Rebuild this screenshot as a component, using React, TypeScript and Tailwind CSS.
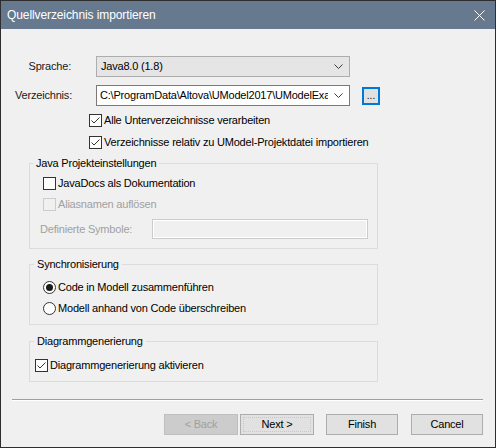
import React from "react";

function Chevron() {
  return (
    <svg width="9" height="5" viewBox="0 0 9 5" className="shrink-0">
      <path d="M0.5 0.5 L4.5 4.5 L8.5 0.5" fill="none" stroke="#3c3c3c" strokeWidth="1" />
    </svg>
  );
}

function Check({ checked, disabled }: { checked?: boolean; disabled?: boolean }) {
  return (
    <span
      className={
        disabled
          ? "w-[13px] h-[13px] shrink-0 border border-[#cccccc] bg-[#f0f0f0] flex items-center justify-center"
          : "w-[13px] h-[13px] shrink-0 border border-[#333333] bg-white flex items-center justify-center"
      }
    >
      {checked && (
        <svg width="11" height="11" viewBox="0 0 11 11">
          <path d="M1.5 5.5 L4 8 L9.5 2.5" fill="none" stroke="#333333" strokeWidth="1" />
        </svg>
      )}
    </span>
  );
}

function Radio({ checked }: { checked?: boolean }) {
  return (
    <span className="w-[13px] h-[13px] shrink-0 rounded-full border border-[#333333] bg-white flex items-center justify-center">
      {checked && <span className="w-[7px] h-[7px] rounded-full bg-[#1a1a1a]" />}
    </span>
  );
}

export default function App() {
  return (
    <div className="w-[496px] h-[448px] bg-[#f0f0f0] border border-[#2e2e2e] flex flex-col text-[11px] tracking-[-0.2px] leading-[15px] text-black font-['Liberation_Sans',Arial,sans-serif] overflow-hidden">
      {/* title bar */}
      <div className="h-[28px] shrink-0 bg-[#67798f] flex items-center justify-between pl-[6px] pr-[10px] text-white text-[12px] tracking-[-0.1px]">
        <span>Quellverzeichnis importieren</span>
        <svg width="11" height="11" viewBox="0 0 11 11">
          <path d="M0.5 0.5 L10.5 10.5 M10.5 0.5 L0.5 10.5" stroke="#ffffff" strokeWidth="1" />
        </svg>
      </div>

      {/* Sprache */}
      <div className="mt-[27px] h-[21px] flex items-center">
        <span className="w-[70px] text-right text-[#1a1a1a]">Sprache:</span>
        <div className="ml-[25px] w-[254px] h-[21px] bg-[#e5e5e5] border border-[#adadad] flex items-center justify-between pl-[4px] pr-[6px]">
          <span>Java8.0 (1.8)</span>
          <Chevron />
        </div>
      </div>

      {/* Verzeichnis */}
      <div className="mt-[8px] h-[21px] flex items-center">
        <span className="w-[71px] text-right text-[#1a1a1a]">Verzeichnis:</span>
        <div className="ml-[24px] w-[254px] h-[21px] bg-white border border-[#7a7a7a] flex items-center pl-[3px] pr-[6px] gap-[6px]">
          <span className="flex-1 min-w-0 overflow-hidden whitespace-nowrap">
            C:\ProgramData\Altova\UModel2017\UModelExamples
          </span>
          <Chevron />
        </div>
        <div className="ml-[12px] w-[18px] h-[18px] border-2 border-[#0078d7] bg-[#e1e1e1] flex items-end justify-center pb-[2px] text-[10px] leading-[10px] tracking-normal">
          ...
        </div>
      </div>

      {/* directory options */}
      <div className="mt-[4px] ml-[88px] h-[20px] flex items-center gap-[2px]">
        <Check checked />
        <span>Alle Unterverzeichnisse verarbeiten</span>
      </div>
      <div className="mt-[2px] ml-[88px] h-[20px] flex items-center gap-[2px]">
        <Check checked />
        <span>Verzeichnisse relativ zu UModel-Projektdatei importieren</span>
      </div>

      {/* Java Projekteinstellungen */}
      <fieldset className="mt-[4px] ml-[28px] w-[349px] border border-[#dcdcdc] pb-[9px]">
        <legend className="ml-[3px] px-[3px] leading-[15px]">Java Projekteinstellungen</legend>
        <div className="mt-[2px] h-[21px] pl-[13px] flex items-center gap-[2px]">
          <Check />
          <span>JavaDocs als Dokumentation</span>
        </div>
        <div className="h-[21px] pl-[13px] flex items-center gap-[2px]">
          <Check disabled />
          <span className="text-[#a0a0a0]">Aliasnamen auflösen</span>
        </div>
        <div className="mt-[4px] h-[20px] pl-[10px] pr-[9px] flex items-center">
          <span className="text-[#a0a0a0]">Definierte Symbole:</span>
          <div className="ml-auto w-[216px] h-[20px] border border-[#cccccc] shadow-[inset_0_0_0_1px_#ffffff] bg-[#f0f0f0]" />
        </div>
      </fieldset>

      {/* Synchronisierung */}
      <fieldset className="mt-[8px] ml-[28px] w-[349px] border border-[#dcdcdc] pb-[5px]">
        <legend className="ml-[4px] px-[3px] leading-[15px]">Synchronisierung</legend>
        <div className="mt-[5px] h-[21px] pl-[13px] flex items-center gap-[2px]">
          <Radio checked />
          <span>Code in Modell zusammenführen</span>
        </div>
        <div className="h-[21px] pl-[13px] flex items-center gap-[2px]">
          <Radio />
          <span>Modell anhand von Code überschreiben</span>
        </div>
      </fieldset>

      {/* Diagrammgenerierung */}
      <fieldset className="mt-[9px] ml-[28px] w-[349px] border border-[#dcdcdc] pb-[6px]">
        <legend className="ml-[4px] px-[3px] leading-[15px]">Diagrammgenerierung</legend>
        <div className="mt-[6px] h-[20px] pl-[5px] flex items-center gap-[2px]">
          <Check checked />
          <span>Diagrammgenerierung aktivieren</span>
        </div>
      </fieldset>

      {/* separator */}
      <div className="mt-[17px] ml-[11px] w-[471px] border-t border-[#a0a0a0] border-b border-b-white" />

      {/* buttons */}
      <div className="mt-[13px] flex">
        <button className="ml-[163px] w-[74px] h-[21px] bg-[#cccccc] border border-[#bfbfbf] text-[#a0a0a0]">
          &lt; Back
        </button>
        <button className="ml-[2px] w-[74px] h-[21px] bg-[#e1e1e1] border border-[#adadad] text-black p-[2px]">
          <span className="block w-full h-full border border-dotted border-[#c8c8c8] leading-[13px]">Next &gt;</span>
        </button>
        <button className="ml-[12px] w-[72px] h-[21px] bg-[#e1e1e1] border border-[#adadad] text-black">
          Finish
        </button>
        <button className="ml-[13px] w-[72px] h-[21px] bg-[#e1e1e1] border border-[#adadad] text-black">
          Cancel
        </button>
      </div>
    </div>
  );
}
